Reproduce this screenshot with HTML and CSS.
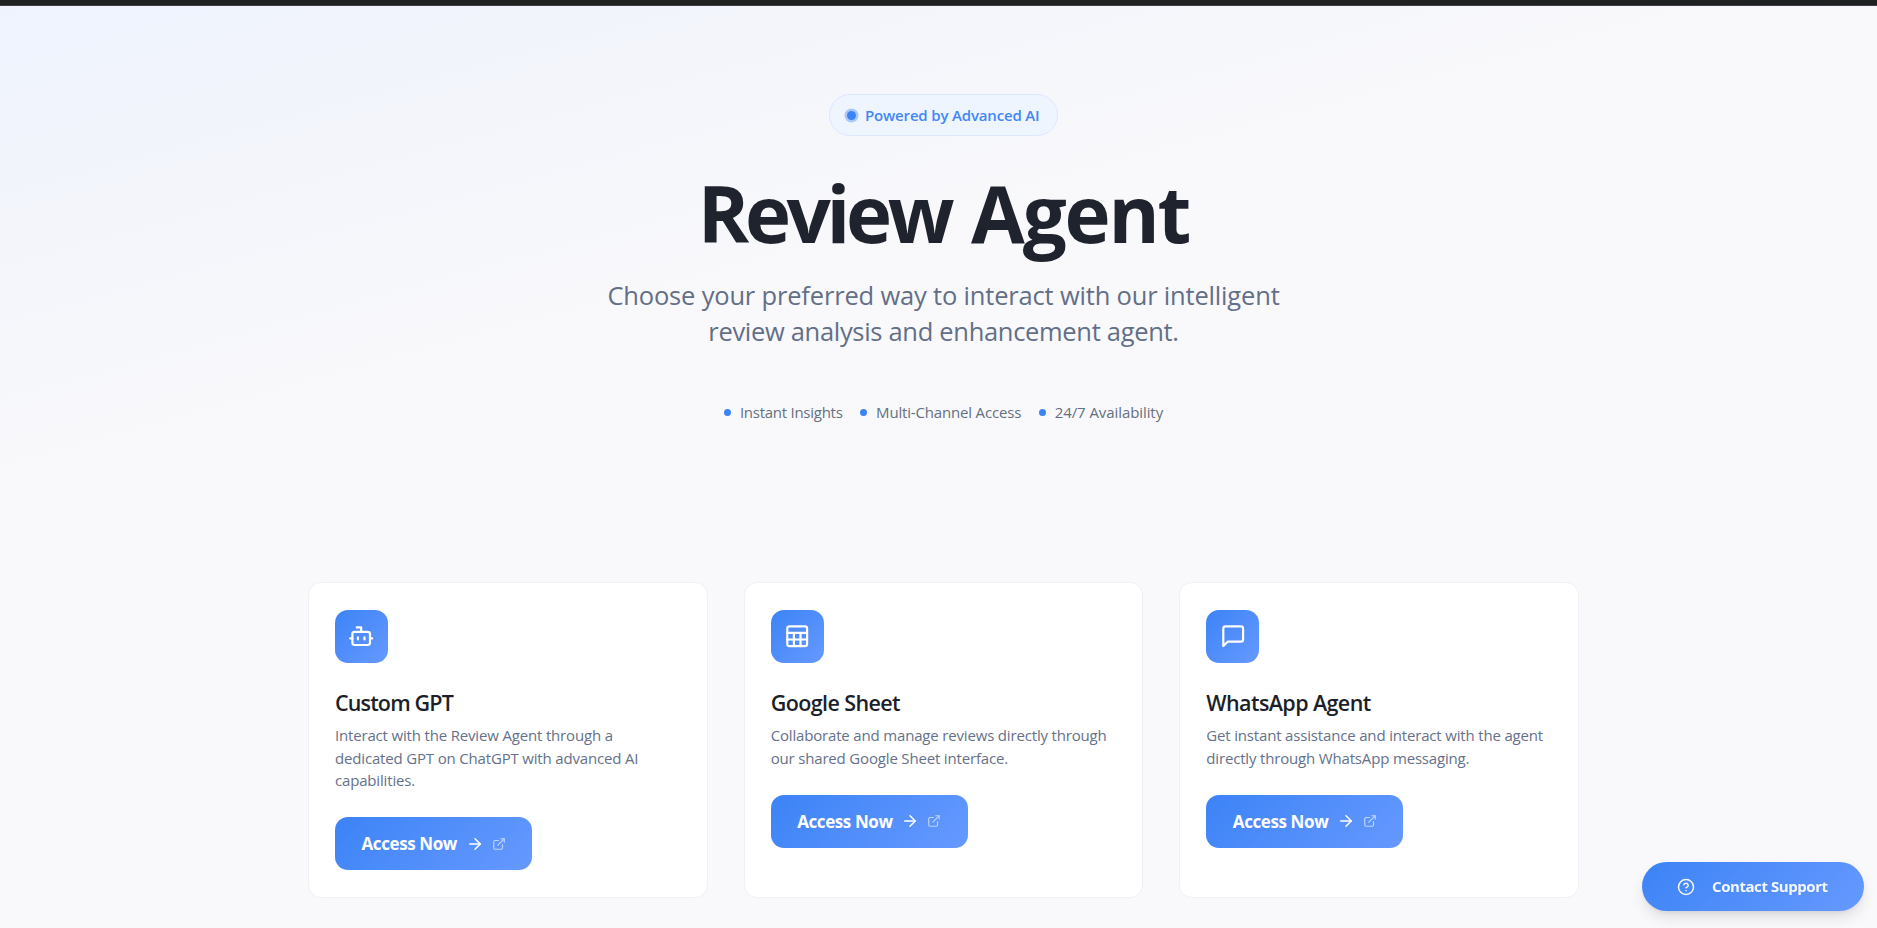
FILE: index.html
```html
<!DOCTYPE html>
<html lang="en">
<head>
<meta charset="utf-8">
<title>Review Agent</title>
<link rel="stylesheet" href="styles.css">
</head>
<body>
<svg class="sprite" aria-hidden="true">
  <symbol id="arrow" viewBox="0 0 24 24"><path d="M5 12h14"/><path d="m12 5 7 7-7 7"/></symbol>
  <symbol id="external" viewBox="0 0 24 24"><path d="M15 3h6v6"/><path d="M10 14 21 3"/><path d="M18 13v6a2 2 0 0 1-2 2H5a2 2 0 0 1-2-2V8a2 2 0 0 1 2-2h6"/></symbol>
</svg>
<div class="topbar"></div>
<header class="hero">
  <div class="pill"><span class="pill-dot"></span><span>Powered by Advanced AI</span></div>
  <h1 class="title"><span class="title-first">Review</span> Agent</h1>
  <p class="subtitle"><span class="subtitle-first">Choose your preferred way to interact with our intelligent</span><br>review analysis and enhancement agent.</p>
  <ul class="features">
    <li class="feature">Instant Insights</li>
    <li class="feature">Multi-Channel Access</li>
    <li class="feature">24/7 Availability</li>
  </ul>
</header>
<main class="cards">
  <article class="card">
    <div class="card-icon"><svg class="icon" viewBox="0 0 24 24"><path d="M12 8V4H8"/><rect width="16" height="12" x="4" y="8" rx="2"/><path d="M2 14h2M20 14h2M15 13v2M9 13v2"/></svg></div>
    <h2 class="card-title">Custom GPT</h2>
    <p class="card-text">Interact with the Review Agent through a<br>dedicated GPT on ChatGPT with advanced AI<br>capabilities.</p>
    <a class="button"><span class="button-label">Access Now</span><svg class="icon arrow"><use href="#arrow"/></svg><svg class="icon external" viewBox="0 0 24 24"><use href="#external"/></svg></a>
  </article>
  <article class="card">
    <div class="card-icon"><svg class="icon" viewBox="0 0 24 24"><rect width="18" height="18" x="3" y="3" rx="2"/><path d="M3 9h18M3 15h18M9 9v12M15 9v12"/></svg></div>
    <h2 class="card-title card-title-wide">Google Sheet</h2>
    <p class="card-text">Collaborate and manage reviews directly through<br>our shared Google Sheet interface.</p>
    <a class="button"><span class="button-label">Access Now</span><svg class="icon arrow"><use href="#arrow"/></svg><svg class="icon external" viewBox="0 0 24 24"><use href="#external"/></svg></a>
  </article>
  <article class="card">
    <div class="card-icon"><svg class="icon" viewBox="0 0 24 24"><path d="M21 15a2 2 0 0 1-2 2H7l-4 4V5a2 2 0 0 1 2-2h14a2 2 0 0 1 2 2z"/></svg></div>
    <h2 class="card-title card-title-wide">WhatsApp Agent</h2>
    <p class="card-text">Get instant assistance and interact with the agent<br>directly through WhatsApp messaging.</p>
    <a class="button"><span class="button-label">Access Now</span><svg class="icon arrow"><use href="#arrow"/></svg><svg class="icon external" viewBox="0 0 24 24"><use href="#external"/></svg></a>
  </article>
</main>
<a class="support"><svg class="icon help" viewBox="0 0 24 24"><circle cx="12" cy="12" r="10"/><path d="M9.09 9a3 3 0 0 1 5.83 1c0 2-3 3-3 3"/><path d="M12 17h.01"/></svg><span class="support-label">Contact Support</span></a>
</body>
</html>
```
FILE: styles.css
```css
* { box-sizing: border-box; margin: 0; padding: 0; }
body {
  height: 928px;
  overflow: hidden;
  background: #f9f9fb;
  color: #1f232e;
  font-family: "Open Sans", "Noto Sans", sans-serif;
  font-size: 15px;
}
.sprite { display: none; }
.icon { fill: none; stroke: currentColor; stroke-width: 2; stroke-linecap: round; stroke-linejoin: round; flex: none; }
.topbar { height: 6px; background: #202221; border-bottom: 1px solid #413d44; }
.hero {
  display: flex;
  flex-direction: column;
  align-items: center;
  height: 509px;
  padding: 88px 0 0 10px;
  background: linear-gradient(to bottom right, #eef3fe 0%, #f1f4fc 12%, #f5f6fb 28%, #f9f9fb 50%);
}
.pill {
  display: flex;
  align-items: center;
  gap: 9px;
  width: 229px;
  height: 42px;
  padding-left: 17px;
  border: 1px solid #dbe8fd;
  border-radius: 21px;
  background: #eff5fe;
  color: #4387f6;
  font-weight: 600;
  letter-spacing: -0.17px;
  white-space: nowrap;
}
.pill-dot { width: 9px; height: 9px; border-radius: 50%; background: #3c83f6; box-shadow: 0 0 0 2.5px #a9c8fa; }
.title { margin-top: 33px; font-size: 78px; line-height: 88px; font-weight: 700; letter-spacing: -2.2px; word-spacing: 3px; }
.title-first { letter-spacing: -4.4px; }
.subtitle { margin-top: 20px; color: #636f87; font-size: 25.5px; line-height: 36px; letter-spacing: -0.31px; text-align: center; }
.subtitle-first { letter-spacing: -0.18px; }
.features { display: flex; gap: 17.5px; margin-top: 52px; list-style: none; color: #65707f; line-height: 22px; letter-spacing: -0.17px; }
.feature { display: flex; align-items: center; gap: 9px; }
.feature:first-child { letter-spacing: -0.26px; }
.feature:last-child { letter-spacing: -0.08px; }
.feature::before { content: ""; width: 7px; height: 7px; border-radius: 50%; background: #3c83f6; }
.cards { display: grid; grid-template-columns: repeat(3, 1fr); gap: 36px; width: 1271px; margin-left: 308px; padding-top: 67px; }
.card { height: 316px; padding: 27px 26px; border: 1px solid #f0f1f4; border-radius: 13px; background: #fff; }
.card-icon {
  display: grid;
  place-items: center;
  width: 53px;
  height: 53px;
  border-radius: 13px;
  background: linear-gradient(135deg, #3c83f6, #6699ff);
  color: #fff;
}
.card-icon .icon { width: 26.4px; height: 26.4px; }
.card-title { margin-top: 26px; font-size: 21.5px; line-height: 28px; font-weight: 600; letter-spacing: -0.85px; color: #1c1f2a; }
.card-title-wide { letter-spacing: -0.6px; }
.card-text { margin-top: 7.3px; color: #65718a; line-height: 22.4px; letter-spacing: -0.17px; white-space: nowrap; }
.button {
  display: flex;
  align-items: center;
  width: 197px;
  height: 53px;
  margin-top: 25.5px;
  padding-left: 26.5px;
  border-radius: 13px;
  background: linear-gradient(135deg, #3c83f6, #6699ff);
  color: #fff;
  font-size: 17px;
  font-weight: 700;
  letter-spacing: -0.4px;
}
.button-label { width: 104px; white-space: nowrap; }
.arrow { width: 18px; height: 18px; }
.external { width: 14px; height: 14px; margin-left: 8px; opacity: 0.6; }
.support {
  position: fixed;
  right: 13px;
  bottom: 17px;
  display: flex;
  align-items: center;
  gap: 17px;
  width: 222px;
  height: 49px;
  padding-left: 35px;
  border-radius: 25px;
  background: linear-gradient(135deg, #3c83f6, #6699ff);
  box-shadow: 0 8px 16px -3px rgba(0, 0, 0, 0.13), 0 3px 6px -3px rgba(0, 0, 0, 0.1);
  color: #f5f8ff;
  font-weight: 700;
  letter-spacing: -0.43px;
  white-space: nowrap;
}
.support-label { padding-bottom: 1px; }
.help { width: 18px; height: 18px; }
```
